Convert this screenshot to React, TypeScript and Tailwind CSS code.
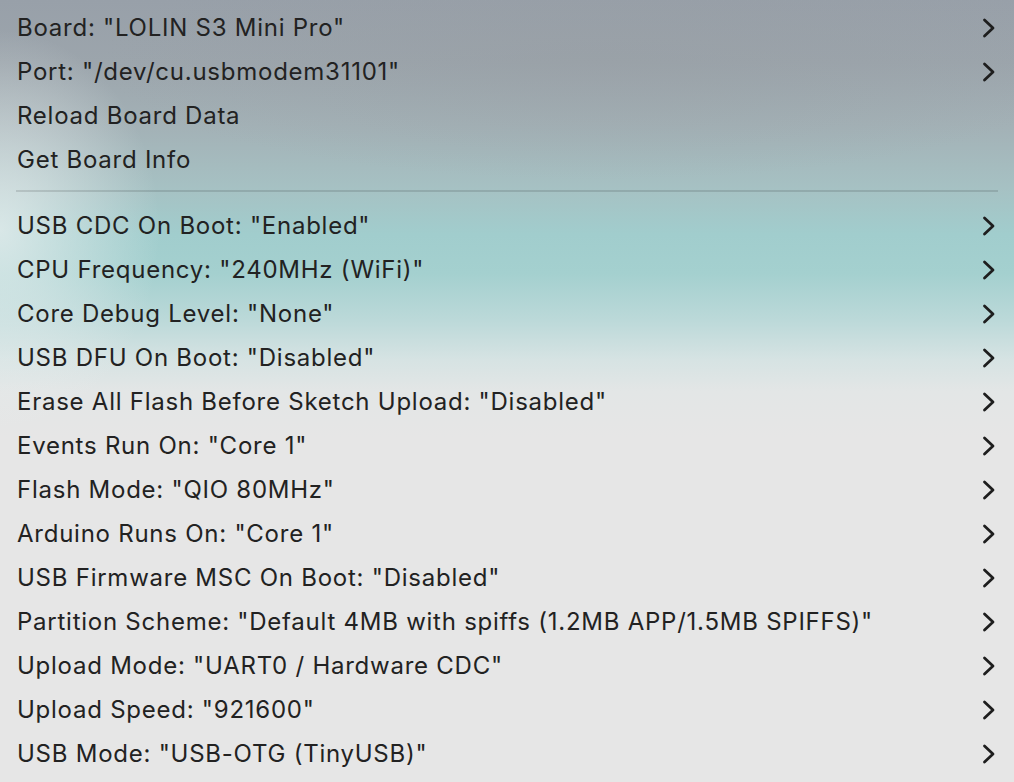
import React from "react";

const top = [
  { label: 'Board: "LOLIN S3 Mini Pro"', sub: true },
  { label: 'Port: "/dev/cu.usbmodem31101"', sub: true },
  { label: "Reload Board Data", sub: false },
  { label: "Get Board Info", sub: false },
];

const bottom = [
  'USB CDC On Boot: "Enabled"',
  'CPU Frequency: "240MHz (WiFi)"',
  'Core Debug Level: "None"',
  'USB DFU On Boot: "Disabled"',
  'Erase All Flash Before Sketch Upload: "Disabled"',
  'Events Run On: "Core 1"',
  'Flash Mode: "QIO 80MHz"',
  'Arduino Runs On: "Core 1"',
  'USB Firmware MSC On Boot: "Disabled"',
  'Partition Scheme: "Default 4MB with spiffs (1.2MB APP/1.5MB SPIFFS)"',
  'Upload Mode: "UART0 / Hardware CDC"',
  'Upload Speed: "921600"',
  'USB Mode: "USB-OTG (TinyUSB)"',
];

function Chevron() {
  return (
    <svg width="14" height="20" viewBox="0 0 14 20" className="block">
      <polyline
        points="2.5,2 11,10 2.5,18"
        fill="none"
        stroke="#1e1e1e"
        strokeWidth="2.8"
        strokeLinecap="round"
        strokeLinejoin="round"
      />
    </svg>
  );
}

function Row({ label, sub }: { label: string; sub: boolean }) {
  return (
    <div className="flex h-[44px] items-center justify-between pl-[1px] pr-[2px]">
      <span className="whitespace-nowrap">{label}</span>
      {sub && <Chevron />}
    </div>
  );
}

export default function App() {
  return (
    <div className="relative h-[782px] w-[1014px] overflow-hidden bg-[#e6e6e6]">
      <div className="absolute inset-0 bg-[linear-gradient(180deg,#98a0a9_0%,#9ca5ac_8%,#a3b1b6_16%,#a6c1c3_24%,#a1cdcd_30%,#a4d0cf_35%,#bcd9d9_41%,#d6e3e3_46%,#e3e6e6_50%,#e6e6e6_56%,#e6e6e6_100%)]" />
      <div className="absolute inset-0 bg-[radial-gradient(ellipse_160px_200px_at_0px_230px,rgba(235,240,240,0.75),rgba(235,240,240,0)_100%)]" />
      <div className="absolute inset-0 bg-[radial-gradient(ellipse_500px_120px_at_600px_60px,rgba(150,155,160,0.35),rgba(150,155,160,0)_100%)]" />
      <div className="relative px-[16px] pt-[6px] text-[24px] leading-none text-[#222222] [font-family:Inter,'Noto_Sans',sans-serif] tracking-[0.75px]">
        {top.map((r) => (
          <Row key={r.label} label={r.label} sub={r.sub} />
        ))}
        <div className="flex h-[22px] flex-col pt-[8px]">
          <div className="h-[2px] bg-black/[0.12]" />
        </div>
        {bottom.map((l) => (
          <Row key={l} label={l} sub={true} />
        ))}
      </div>
    </div>
  );
}
